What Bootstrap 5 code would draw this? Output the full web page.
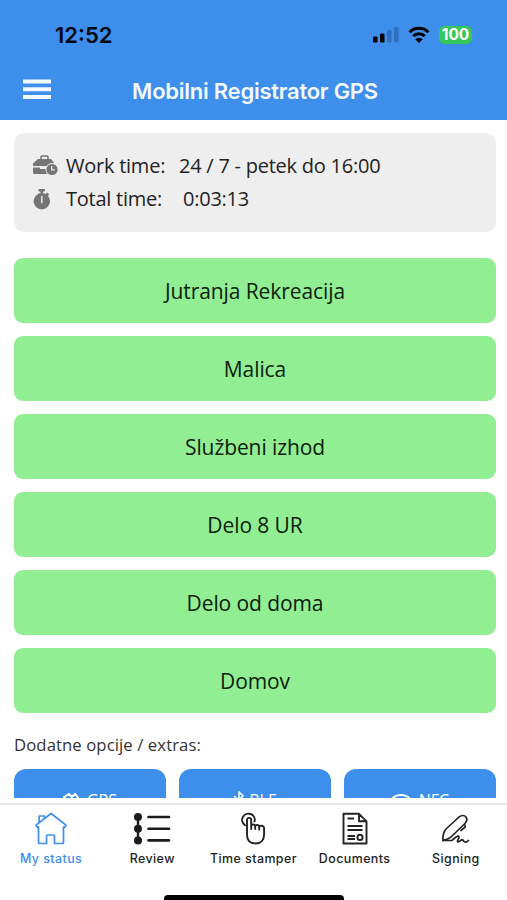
<!DOCTYPE html>
<html lang="sl">
<head>
<meta charset="utf-8">
<meta name="viewport" content="width=device-width, initial-scale=1">
<title>Mobilni Registrator GPS</title>
<link href="https://cdn.jsdelivr.net/npm/bootstrap@5.3.0/dist/css/bootstrap.min.css" rel="stylesheet">
<style>
  body { font-family: "Open Sans", "Noto Sans", sans-serif; color: #222; background: #fff; }
  .screen { height: 900px; }
  .top { background: #3e8eeb; height: 119.5px; font-family: Inter, "Liberation Sans", sans-serif; }
  .status-row { height: 69px; padding: 0 32px 0 55px; }
  .clock { font-size: 22px; font-weight: 600; color: #000814; letter-spacing: 0; line-height: 1; }
  .battery { background: #34c759; color: #fff; width: 33px; height: 18px; border-radius: 5.5px; font-size: 15.5px; font-weight: 700; line-height: 1; }
  .title-row { height: 50px; display: grid; grid-template-columns: 80px 1fr 77px; padding-bottom: 7px; }
  .menu-icon { margin-left: 23px; margin-bottom: 3px; }
  .app-title { font-size: 22px; font-weight: 600; color: #f2faff; letter-spacing: -.25px; line-height: 1; white-space: nowrap; }
  .main-area { padding: 13.5px 11px 0 14px; }
  .info { background: #eee; border-radius: 10px; height: 99px; padding: 16px 19px; font-size: 20px; letter-spacing: -.24px; line-height: 33.4px; }
  .info-icon { width: 33px; }
  .info-key { width: 113px; }
  .actions { margin-top: 26px; gap: 13.1px; }
  .btn-action { --bs-btn-bg: #92ee92; --bs-btn-color: #0b200b; --bs-btn-border-width: 0; --bs-btn-hover-bg: #83e483; height: 65px; border-radius: 9px; font-size: 21px; letter-spacing: -.09px; line-height: 22px; padding: 0; }
  .extras-label { font-size: 16.7px; letter-spacing: .09px; line-height: 24px; margin-top: 20px; color: #333; }
  .extras { margin-top: 12px; gap: 13px; }
  .btn-extra { --bs-btn-bg: #3e8eeb; --bs-btn-color: #fff; --bs-btn-border-width: 0; height: 62px; border-radius: 12px; font-size: 16px; line-height: 1; padding: 0; }
  .tabs { height: 102px; padding-top: 5px; font-family: Inter, "Liberation Sans", sans-serif; }
  .tab-line { height: 2px; background: #e9e9eb; }
  .tab { color: #222; font-size: 12.4px; font-weight: 500; letter-spacing: .45px; line-height: 16px; padding: 7px 0 0 1px; width: 101.2px; white-space: nowrap; }
  .tab.active { color: #3e8eeb; }
  .tab svg { margin-bottom: 5px; }
  .home-bar { width: 180px; height: 5px; background: #000; border-radius: 4px 4px 0 0; }
</style>
</head>
<body>
<div class="screen d-flex flex-column overflow-hidden">
  <header class="top flex-shrink-0">
    <div class="status-row d-flex align-items-center justify-content-between">
      <span class="clock">12:52</span>
      <div class="d-flex align-items-center">
        <svg width="26" height="17" viewBox="0 0 26 17"><g fill="#000"><rect x="0" y="10.5" width="4.5" height="6" rx="1.2"/><rect x="7" y="7.5" width="4.5" height="9" rx="1.2"/></g><g fill="#2f70c2"><rect x="14" y="4" width="4.5" height="12.5" rx="1.2"/><rect x="21" y="1" width="4.5" height="15.500" rx="1.2"/></g></svg>
        <svg class="ms-2 me-2" width="24" height="18" viewBox="0 0 24 18"><path d="M2.600 6.200a13.300 13.300 0 0 1 18.800 0M6.200 10a8.300 8.300 0 0 1 11.600 0" fill="none" stroke="#000" stroke-width="3"/><path d="M12 17l-3.700-3.700a5.300 5.300 0 0 1 7.400 0z"/></svg>
        <span class="battery d-flex align-items-center justify-content-center">100</span>
        <svg width="3" height="7" viewBox="0 0 3 7"><path d="M1 1q2 2.500 0 5z" fill="#34c759"/></svg>
      </div>
    </div>
    <div class="title-row align-items-center">
      <svg class="menu-icon" width="28" height="21" viewBox="0 0 28 21"><path d="M0 2.500h28M0 10.300h28M0 18.100h28" stroke="#f2faff" stroke-width="4"/></svg>
      <span class="app-title text-center">Mobilni Registrator GPS</span>
    </div>
  </header>

  <main class="main-area flex-grow-1 overflow-hidden">
    <section class="info">
      <div class="d-flex align-items-center">
        <span class="info-icon d-flex"><svg width="26" height="21" viewBox="0 0 26 21" fill="#757575"><path d="M8 4V2.200Q8 1 9.200 1h4.600Q15 1 15 2.200V4" fill="none" stroke="#757575" stroke-width="1.600"/><path d="M5 4h13l3 4v3H0V8.500z"/><path d="M0 12.500h7V14h6v-1.500h3V19H1.500Q0 19 0 17.500z"/><circle cx="19" cy="14.500" r="6.500" fill="#eee"/><circle cx="19" cy="14.500" r="5.600"/><path d="M18.700 11V14.800h3" stroke="#eee" stroke-width="1.200" fill="none"/></svg></span>
        <span class="info-key">Work time:</span><span>24 / 7 - petek do 16:00</span>
      </div>
      <div class="d-flex align-items-center">
        <span class="info-icon d-flex"><svg width="18" height="21" viewBox="0 0 18 21" fill="#757575"><rect x="5.500" y="0" width="6.500" height="2.500" rx=".7"/><path d="M7.500 2h2.500v3H7.500zM14 3.500l2.300 2-2.300 2.500-2-2z"/><circle cx="8.800" cy="12.300" r="8.200"/><path d="M8.800 7.500v6" stroke="#ddd" stroke-width="1.700" stroke-linecap="round"/></svg></span>
        <span class="info-key">Total time:</span><span class="ps-1">0:03:13</span>
      </div>
    </section>

    <div class="actions d-flex flex-column">
      <button class="btn btn-action">Jutranja Rekreacija</button>
      <button class="btn btn-action">Malica</button>
      <button class="btn btn-action">Službeni izhod</button>
      <button class="btn btn-action">Delo 8 UR</button>
      <button class="btn btn-action">Delo od doma</button>
      <button class="btn btn-action">Domov</button>
    </div>

    <div class="extras-label">Dodatne opcije / extras:</div>
    <div class="extras d-flex">
      <button class="btn btn-extra flex-fill w-100 d-flex align-items-center justify-content-center gap-2"><svg width="16" height="14" viewBox="0 0 16 14" fill="none" stroke="#fff" stroke-width="2"><path d="M1 4l5-3 3 3 3-3 3 3.500-6 8z"/></svg>GPS</button>
      <button class="btn btn-extra flex-fill w-100 d-flex align-items-center justify-content-center gap-1"><svg width="12" height="18" viewBox="0 0 12 18" fill="none" stroke="#fff" stroke-width="1.500"><path d="M1 5l9 8-4 4V1l4 4-9 8"/></svg>BLE</button>
      <button class="btn btn-extra flex-fill w-100 d-flex align-items-center justify-content-center gap-2"><svg width="20" height="13" viewBox="0 0 20 13" fill="none" stroke="#fff" stroke-width="2"><ellipse cx="10" cy="6.500" rx="9" ry="5.500"/><path d="M5 9q5-6 10 0"/></svg>NFC</button>
    </div>
  </main>

  <nav class="tabs flex-shrink-0 d-flex flex-column bg-white">
    <div class="tab-line"></div>
    <div class="d-flex flex-grow-1">
      <a class="tab active d-flex flex-column align-items-center text-decoration-none" href="#"><svg width="32" height="34" viewBox="0 0 32 34" fill="none" stroke="currentColor" stroke-width="1.700" stroke-linejoin="round"><path d="M16 1.500L1 13.200l1.500 2.200L3.500 15v15.500q0 1 1 1h7v-7.200q0-1.300 1.300-1.300h5.400q1.300 0 1.300 1.300v7.200h8q1 0 1-1V15l1 .4 1.500-2.200z"/><path d="M4.200 10.500V4h5.300v2.300"/></svg>My status</a>
      <a class="tab d-flex flex-column align-items-center text-decoration-none" href="#"><svg width="38" height="34" viewBox="0 0 38 34" stroke="#1b1b1b" fill="#1b1b1b"><path d="M5 5v24" stroke-width="2.400"/><g stroke="none"><circle cx="5" cy="5" r="4"/><circle cx="5" cy="16.700" r="4"/><circle cx="5" cy="28.400" r="4"/></g><path d="M15.500 5H36M15.500 16.700H36M15.500 28.400H36" stroke-width="2.600" stroke-linecap="round"/></svg>Review</a>
      <a class="tab d-flex flex-column align-items-center text-decoration-none" href="#"><svg width="26" height="34" viewBox="0 0 26 34" fill="none" stroke="#222" stroke-width="1.900" stroke-linecap="round" stroke-linejoin="round"><path d="M5 13.200A6.300 6.300 0 1 1 14.500 9.500"/><path d="M7 23V8a2.100 2.100 0 0 1 4.200 0v9M11.200 13q3.800-1.400 4 1.500V17M15.200 13.300q3.800-1 4 1.500V17.500M19.200 14q4.900-1 4.900 2.300v6.200c0 5.500-3.300 9-8.500 9S7 28.500 7 22.500"/></svg>Time stamper</a>
      <a class="tab d-flex flex-column align-items-center text-decoration-none" href="#"><svg width="26" height="34" viewBox="0 0 26 34" fill="none" stroke="#222" stroke-width="1.900" stroke-linejoin="round"><path d="M1.500 1.800H17l7.500 7.500v22.200h-23zM17 1.800v7.500h7.500M5.500 6.500H12M5.500 14h15M5.500 18h15M5.500 24h7.500M5.500 27h7.500"/><circle cx="18" cy="25.400" r="2.600"/></svg>Documents</a>
      <a class="tab d-flex flex-column align-items-center text-decoration-none" href="#"><svg width="30" height="34" viewBox="0 0 30 34" fill="none" stroke="#222" stroke-width="1.700" stroke-linecap="round" stroke-linejoin="round"><path d="M2 28.500c-.5-4 .2-8 3-11.500L18 5c2.500-2 5.500-2 7 0 1.500 2 .8 4.500-1 6.500L10.500 24.500C8 27 5 27.800 2 28.500z"/><path d="M23.500 12.500l.8 2.300-4.300 3.700M2 28.500h9c3.500-3.500 6-5 7-4 1 1.500-3 5-1 5.400 2 0 3-2.300 4.500-2.200 1.500.5.500 2.400 3 2.400 1.500 0 2-1 3-1.700"/></svg>Signing</a>
    </div>
    <div class="home-bar mx-auto flex-shrink-0"></div>
  </nav>
</div>
<script src="https://cdn.jsdelivr.net/npm/bootstrap@5.3.0/dist/js/bootstrap.bundle.min.js"></script>
</body>
</html>
